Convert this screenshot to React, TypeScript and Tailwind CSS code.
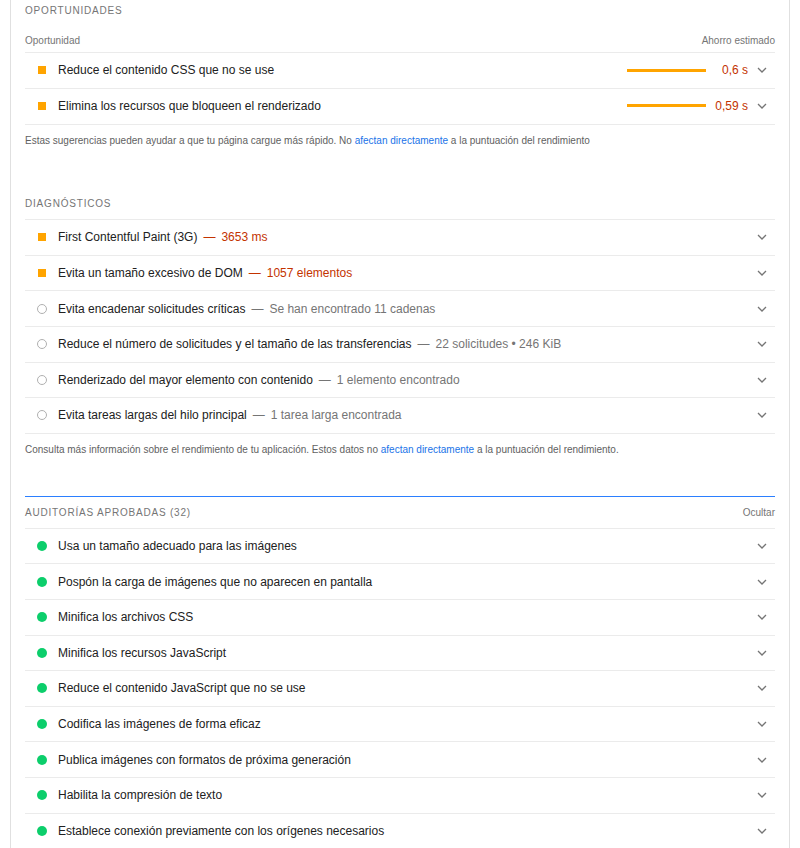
import React from "react";

type Kind = "fail" | "info" | "pass";

interface Audit {
  title: string;
  detail?: string;
  kind: Kind;
  red?: boolean;
}

const opportunities = [
  { title: "Reduce el contenido CSS que no se use", value: "0,6 s" },
  { title: "Elimina los recursos que bloqueen el renderizado", value: "0,59 s" },
];

const diagnostics: Audit[] = [
  { title: "First Contentful Paint (3G)", detail: "3653 ms", kind: "fail", red: true },
  { title: "Evita un tamaño excesivo de DOM", detail: "1057 elementos", kind: "fail", red: true },
  { title: "Evita encadenar solicitudes críticas", detail: "Se han encontrado 11 cadenas", kind: "info" },
  {
    title: "Reduce el número de solicitudes y el tamaño de las transferencias",
    detail: "22 solicitudes • 246 KiB",
    kind: "info",
  },
  { title: "Renderizado del mayor elemento con contenido", detail: "1 elemento encontrado", kind: "info" },
  { title: "Evita tareas largas del hilo principal", detail: "1 tarea larga encontrada", kind: "info" },
];

const passed: string[] = [
  "Usa un tamaño adecuado para las imágenes",
  "Pospón la carga de imágenes que no aparecen en pantalla",
  "Minifica los archivos CSS",
  "Minifica los recursos JavaScript",
  "Reduce el contenido JavaScript que no se use",
  "Codifica las imágenes de forma eficaz",
  "Publica imágenes con formatos de próxima generación",
  "Habilita la compresión de texto",
  "Establece conexión previamente con los orígenes necesarios",
];

function Icon({ kind }: { kind: Kind }) {
  if (kind === "fail") return <span className="block h-[8px] w-[8px] bg-[#ffa400]" />;
  if (kind === "info")
    return <span className="block h-[10px] w-[10px] rounded-full border-[1.5px] border-[#b0b0b0]" />;
  return <span className="block h-[10px] w-[10px] rounded-full bg-[#0cce6b]" />;
}

function Chevron() {
  return (
    <svg width="10" height="6" viewBox="0 0 10 6" className="text-[#757575]">
      <path d="M1 1l4 4 4-4" fill="none" stroke="currentColor" strokeWidth="1.3" />
    </svg>
  );
}

function Row({ children, kind }: { children: React.ReactNode; kind: Kind }) {
  return (
    <div className="flex h-[35.6px] items-center border-t border-[#ebebeb]">
      <div className="flex w-[33px] items-center justify-center pl-[1px]">
        <Icon kind={kind} />
      </div>
      {children}
    </div>
  );
}

function SectionTitle({ children, right }: { children: React.ReactNode; right?: string }) {
  return (
    <div className="flex h-[32px] items-center justify-between">
      <span className="text-[10px] tracking-[0.08em] text-[#757575]">{children}</span>
      {right ? <span className="text-[10px] text-[#757575]">{right}</span> : null}
    </div>
  );
}

function Note({ lead, tail }: { lead: string; tail: string }) {
  return (
    <p className="border-t border-[#ebebeb] pt-[9px] text-[10px] leading-[14px] text-[#616161]">
      {lead} <span className="text-[#1a73e8]">afectan directamente</span> {tail}
    </p>
  );
}

function ChevronCell() {
  return (
    <span className="flex w-[27px] items-center justify-end pr-[8px]">
      <Chevron />
    </span>
  );
}

export default function App() {
  return (
    <div
      className="min-h-[848px] bg-white"
      style={{ fontFamily: '"Liberation Sans", Arial, sans-serif' }}
    >
      <div className="ml-[10px] w-[780px] min-h-[848px] border-x border-[#e0e0e0] px-[14px] text-[#212121]">
        {/* Oportunidades */}
        <div className="-mt-[6px]">
          <SectionTitle>OPORTUNIDADES</SectionTitle>
        </div>
        <div className="flex h-[26px] items-center justify-between pt-[2px] text-[10px] text-[#757575]">
          <span>Oportunidad</span>
          <span>Ahorro estimado</span>
        </div>
        {opportunities.map((o) => (
          <Row key={o.title} kind="fail">
            <span className="flex-1 text-[12px]">{o.title}</span>
            <span className="block h-[3px] w-[79px] bg-[#ffa400]" />
            <span className="w-[42px] text-right text-[12px] text-[#c33300]">{o.value}</span>
            <ChevronCell />
          </Row>
        ))}
        <div className="pt-[1px]">
          <Note
            lead="Estas sugerencias pueden ayudar a que tu página cargue más rápido. No"
            tail="a la puntuación del rendimiento"
          />
        </div>

        {/* Diagnósticos */}
        <div className="mt-[39px]">
          <SectionTitle>DIAGNÓSTICOS</SectionTitle>
        </div>
        {diagnostics.map((d) => (
          <Row key={d.title} kind={d.kind}>
            <span className="flex-1 text-[12px]">
              {d.title}
              <span className={d.red ? "text-[#c33300]" : "text-[#757575]"}>
                <span className="mx-[6px]">—</span>
                {d.detail}
              </span>
            </span>
            <ChevronCell />
          </Row>
        ))}
        <Note
          lead="Consulta más información sobre el rendimiento de tu aplicación. Estos datos no"
          tail="a la puntuación del rendimiento."
        />

        {/* Auditorías aprobadas */}
        <div className="mt-[39px] border-t border-blue-500" />
        <div className="-mb-[1px]">
          <SectionTitle right="Ocultar">AUDITORÍAS APROBADAS (32)</SectionTitle>
        </div>
        {passed.map((t) => (
          <Row key={t} kind="pass">
            <span className="flex-1 text-[12px]">{t}</span>
            <ChevronCell />
          </Row>
        ))}
      </div>
    </div>
  );
}
